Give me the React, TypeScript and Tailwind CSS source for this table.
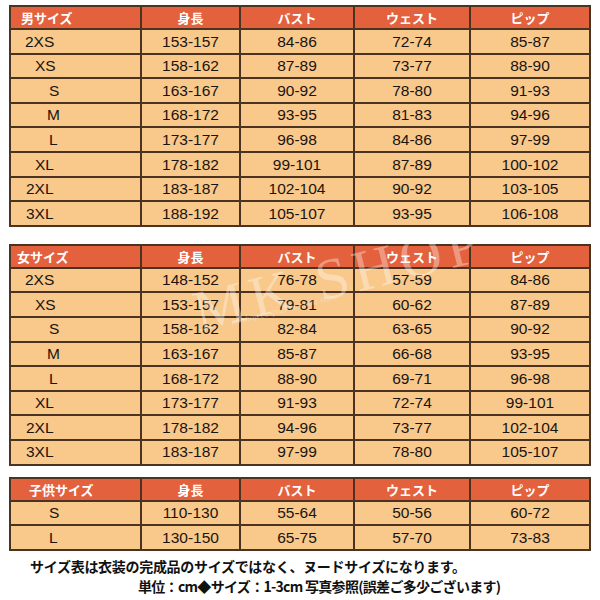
const num = "font-['Liberation_Sans',Arial,sans-serif]";
const jp = "font-['Noto_Sans_CJK_JP',sans-serif]";

type Row = [string, string, string, string, string];

const indent: Record<string, string> = {
  '2XS': 'pl-[14px]',
  XS: 'pl-[24px]',
  S: 'pl-[38px]',
  M: 'pl-[36px]',
  L: 'pl-[38px]',
  XL: 'pl-[24px]',
  '2XL': 'pl-[15px]',
  '3XL': 'pl-[15px]',
};

const men: Row[] = [
  ['2XS', '153-157', '84-86', '72-74', '85-87'],
  ['XS', '158-162', '87-89', '73-77', '88-90'],
  ['S', '163-167', '90-92', '78-80', '91-93'],
  ['M', '168-172', '93-95', '81-83', '94-96'],
  ['L', '173-177', '96-98', '84-86', '97-99'],
  ['XL', '178-182', '99-101', '87-89', '100-102'],
  ['2XL', '183-187', '102-104', '90-92', '103-105'],
  ['3XL', '188-192', '105-107', '93-95', '106-108'],
];

const women: Row[] = [
  ['2XS', '148-152', '76-78', '57-59', '84-86'],
  ['XS', '153-157', '79-81', '60-62', '87-89'],
  ['S', '158-162', '82-84', '63-65', '90-92'],
  ['M', '163-167', '85-87', '66-68', '93-95'],
  ['L', '168-172', '88-90', '69-71', '96-98'],
  ['XL', '173-177', '91-93', '72-74', '99-101'],
  ['2XL', '178-182', '94-96', '73-77', '102-104'],
  ['3XL', '183-187', '97-99', '78-80', '105-107'],
];

const kids: Row[] = [
  ['S', '110-130', '55-64', '50-56', '60-72'],
  ['L', '130-150', '65-75', '57-70', '73-83'],
];

function SizeTable({ title, rows, titlePad }: { title: string; rows: Row[]; titlePad: string }) {
  return (
    <table className="ml-[9px] w-[580px] table-fixed border-collapse border-2 border-[#4a3421]">
      <colgroup>
        <col className="w-[131px]" />
        <col className="w-[99px]" />
        <col className="w-[114px]" />
        <col className="w-[116px]" />
        <col className="w-[120px]" />
      </colgroup>
      <thead>
        <tr className={`h-[23px] bg-[#e4613d] text-[13px] font-bold text-white ${jp}`}>
          <th className={`border-2 border-[#4a3421] p-0 text-left leading-none ${titlePad}`}>{title}</th>
          <th className="border-2 border-[#4a3421] p-0 leading-none">身長</th>
          <th className="border-2 border-[#4a3421] p-0 leading-none">バスト</th>
          <th className="border-2 border-[#4a3421] p-0 leading-none">ウェスト</th>
          <th className="border-2 border-[#4a3421] p-0 leading-none">ピップ</th>
        </tr>
      </thead>
      <tbody>
        {rows.map((row) => (
          <tr key={row[0]} className={`h-[24.6px] bg-[#f9c88b] text-[15.5px] leading-none text-[#1a140f] ${num}`}>
            <td className={`border-2 border-[#4a3421] p-0 ${indent[row[0]]}`}>{row[0]}</td>
            <td className="border-2 border-[#4a3421] p-0 text-center">{row[1]}</td>
            <td className="border-2 border-[#4a3421] p-0 text-center">{row[2]}</td>
            <td className="border-2 border-[#4a3421] p-0 text-center">{row[3]}</td>
            <td className="border-2 border-[#4a3421] p-0 text-center">{row[4]}</td>
          </tr>
        ))}
      </tbody>
    </table>
  );
}

export default function App() {
  return (
    <div className="relative h-[600px] w-[600px] overflow-hidden bg-white pt-[5px]">
      <SizeTable title="男サイズ" rows={men} titlePad="pl-[10px]" />
      <div className="h-[17px]" />
      <SizeTable title="女サイズ" rows={women} titlePad="pl-[6px]" />
      <div className="h-[11px]" />
      <SizeTable title="子供サイズ" rows={kids} titlePad="pl-[18px]" />

      <div className={`mt-[5px] text-[14px] font-bold leading-[20px] text-[#111] ${jp}`}>
        <p className="pl-[30px] tracking-[-0.3px]">サイズ表は衣装の完成品のサイズではなく、ヌードサイズになります。</p>
        <p className="pl-[138px] tracking-[-0.7px]">単位：cm◆サイズ：1-3cm 写真参照(誤差ご多少ございます)</p>
      </div>

      {/* watermark */}
      <div className="pointer-events-none absolute left-[190px] top-[248px] -rotate-[14deg] font-['Liberation_Serif',serif] text-[58px] leading-none tracking-[6px] text-white/35">
        MK SHOP
      </div>
      <div className="pointer-events-none absolute left-[230px] top-[305px] -rotate-[14deg] font-['Liberation_Serif',serif] text-[9px] italic leading-none text-white/35">
        mkshop cosplay costume store
      </div>
    </div>
  );
}
